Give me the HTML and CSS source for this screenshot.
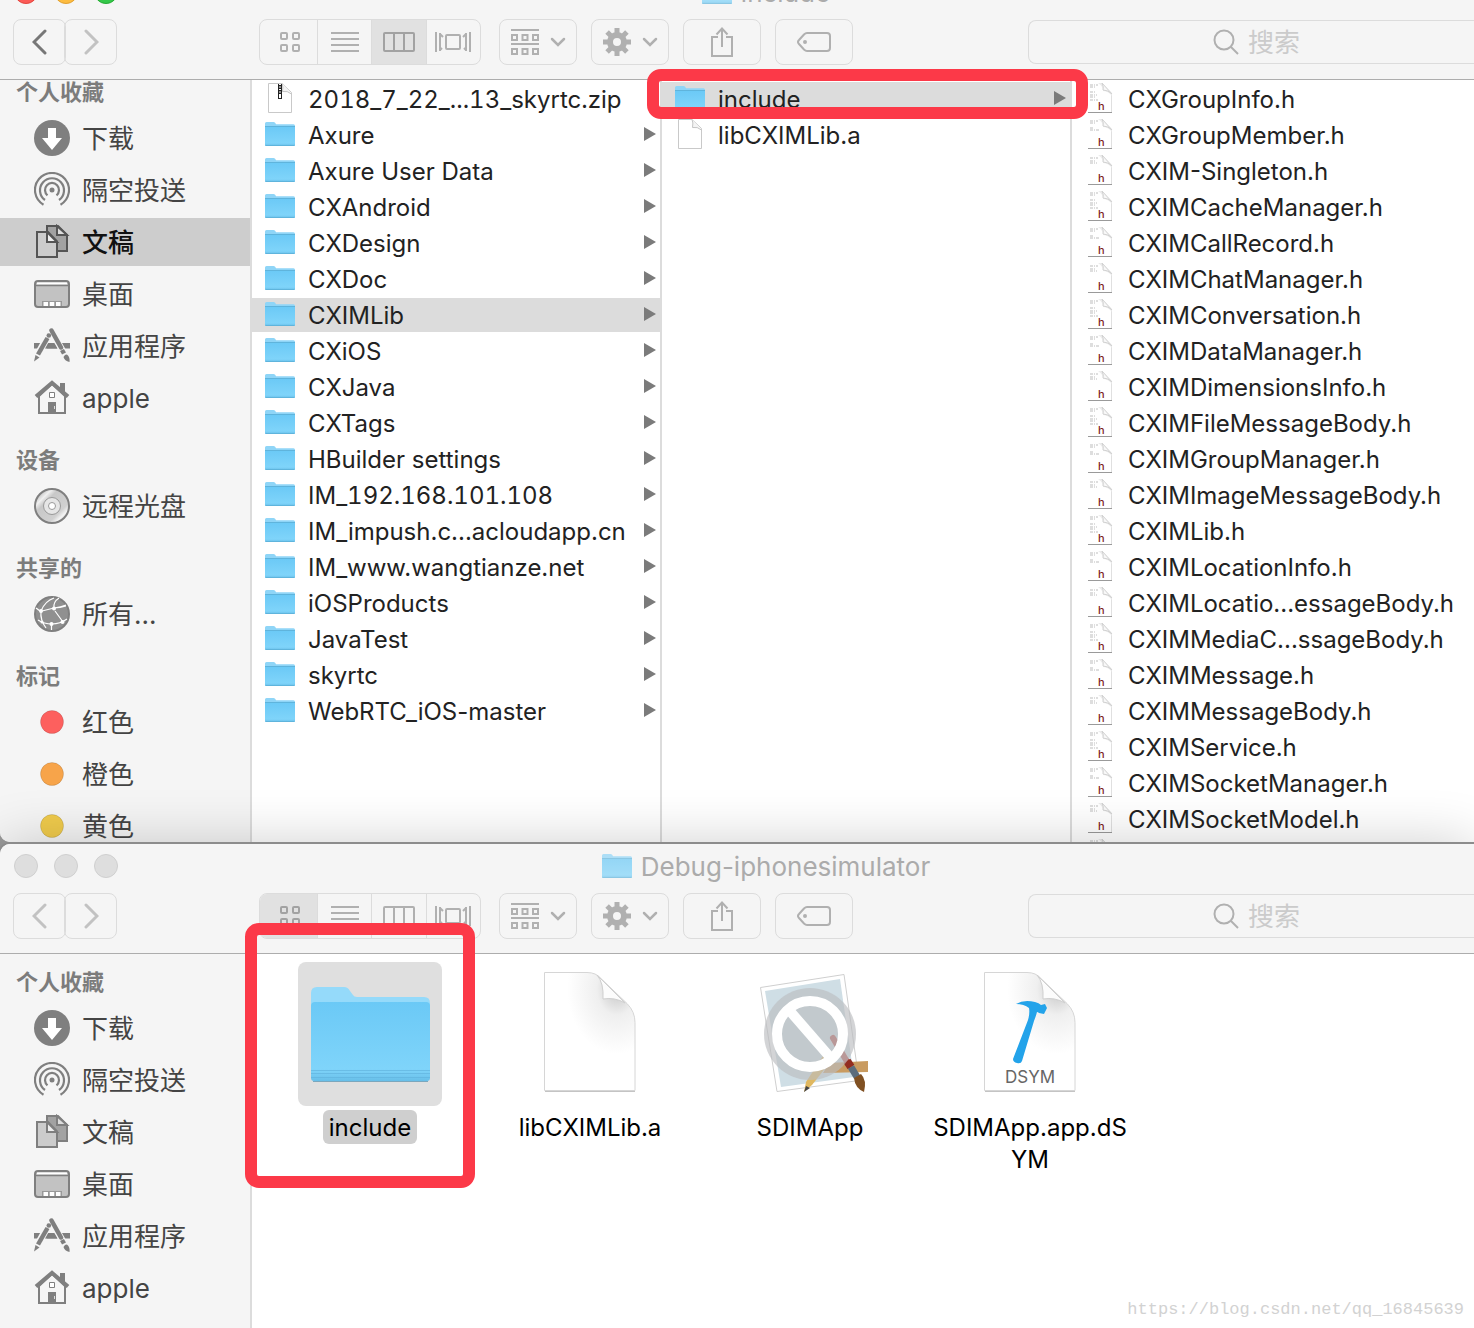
FILE: index.html
```
<!DOCTYPE html>
<html lang="zh-CN">
<head>
    <meta charset="UTF-8">
    <meta name="viewport" content="width=device-width, initial-scale=1.0">
    <title>Finder</title>
    <link rel="stylesheet" href="styles.css">
</head>
<body>
    <!-- 图标 -->
    <svg class="sprite" aria-hidden="true">
        <defs>
            <linearGradient id="gFolder" x1="0" y1="0" x2="0" y2="1">
                <stop offset="0" stop-color="#6bc9f6"/>
                <stop offset=".85" stop-color="#7fd4fa"/>
                <stop offset="1" stop-color="#68bfe9"/>
            </linearGradient>
            <radialGradient id="gFold" cx=".8" cy=".14" r=".55">
                <stop offset=".1" stop-color="#d0d0d0"/>
                <stop offset=".4" stop-color="#efefef"/>
                <stop offset="1" stop-color="#ffffff"/>
            </radialGradient>
            <linearGradient id="gDisc" x1="0" y1="0" x2="1" y2="1">
                <stop offset=".15" stop-color="#c8c8c8"/>
                <stop offset=".25" stop-color="#f0f0f0"/>
                <stop offset=".35" stop-color="#c8c8c8"/>
                <stop offset=".7" stop-color="#d0d0d0"/>
                <stop offset=".8" stop-color="#f4f4f4"/>
                <stop offset=".9" stop-color="#c8c8c8"/>
            </linearGradient>
        </defs>

        <symbol id="folder" viewBox="0 0 30 32">
            <path d="M0 5.500q0-1.500 1.500-1.500h7q1 0 1.600.8l1 1.400H28.500q1.500 0 1.500 1.500V27H0z" fill="#8fd5f7"/>
            <path d="M0 8.500h30V27q0 1-1 1H1q-1 0-1-1z" fill="url(#gFolder)"/>
            <path d="M0 8.500h30M.5 27.500h29" stroke="#5fb4dc" fill="none"/>
        </symbol>
        <symbol id="doc" viewBox="0 0 30 32">
            <path d="M3.500 1.500H17l9.500 9V30.500H3.500z" fill="#fff" stroke="#c9c9c9"/>
            <path d="M17 1.500q1.500 3 .5 8 5-1 9 2.500" fill="#f4f4f4" stroke="#c4c4c4"/>
        </symbol>
        <symbol id="zip" viewBox="0 0 30 32">
            <use href="#doc"/>
            <path d="M15 2v15" stroke="#222" stroke-width="4"/>
            <path d="M15 2v13" stroke="#fff" stroke-width="2" stroke-dasharray="1 1.500"/>
            <path d="M14 12h2v4h-2z" fill="#fff"/>
        </symbol>
        <symbol id="header" viewBox="0 0 30 32">
            <path d="M3 1H17l10 9V30H3z" fill="#fff"/>
            <path d="M26.500 11v19" fill="none" stroke="#e0e0e0"/>
            <path d="M13 1h4l10 10v3q-4-5-9-5 0-5-5-8z" fill="#ececec"/>
            <path d="M17 1q2 4 1 7 5 0 9 4z" fill="#f8f8f8" stroke="#d2d2d2"/>
            <path d="M3 30.500h24" stroke="#9a9a9a"/>
        </symbol>

        <symbol id="download" viewBox="0 0 36 36">
            <circle cx="18" cy="18" r="18" fill="#7f7f7f"/>
            <path d="M14 8h8v10h6L18 30 8 18h6z" fill="#fff"/>
        </symbol>
        <symbol id="airdrop" viewBox="0 0 36 36">
            <g fill="none" stroke="#7f7f7f" stroke-width="2.200">
                <path d="M9.500 32.700A17 17 0 1 1 26.500 32.700"/>
                <path d="M11 28A12 12 0 1 1 25 28"/>
                <path d="M13.500 23.300A7 7 0 1 1 22.500 23.300"/>
            </g>
            <circle cx="18" cy="18" r="2.500" fill="#7f7f7f"/>
        </symbol>
        <symbol id="docs" viewBox="0 0 36 36">
            <g stroke="currentColor" stroke-width="2">
                <path d="M13 2h11l9 9v16H13z" fill="#a2a2a2"/>
                <path d="M23 2v9h10z" fill="#ddd"/>
                <path d="M3 8h11l9 9.500V33H3z" fill="#ccc"/>
                <path d="M13 8v10h10z" fill="#eee"/>
            </g>
        </symbol>
        <symbol id="desktop" viewBox="0 0 36 36">
            <rect x="1" y="5" width="34" height="26" rx="3" fill="#c2c2c2" stroke="#7f7f7f" stroke-width="2"/>
            <path d="M3 6.500h30v2H3z" fill="#fff"/>
            <path d="M2 9.500h32" stroke="#7f7f7f" stroke-width="1.500"/>
            <path d="M8 25h20v5H8z" fill="#999"/>
            <path d="M9.500 26h4.500v4H9.500zM15.750 26h4.500v4h-4.500zM22 26h4.500v4H22z" fill="#fff"/>
        </symbol>
        <symbol id="apps" viewBox="0 0 36 36">
            <path d="M0 15h36v5.500H0z" fill="#7f7f7f"/>
            <path d="M15.500 5 3 28M17 3l15 26" stroke="#f5f5f5" stroke-width="7"/>
            <path d="M12.500 20.500 18 11l5.500 9.500z" fill="#7f7f7f"/>
            <path d="M18 7.500 22 15h-8z" fill="#f5f5f5"/>
            <path d="M13.500 10 4 26.500" stroke="#7f7f7f" stroke-width="4.500"/>
            <circle cx="14.800" cy="7.500" r="2.300" fill="#7f7f7f"/>
            <path d="M1.500 27l4 2.500L0 33.500z" fill="#7f7f7f"/>
            <path d="M17.500 2.500l9.500 17" stroke="#7f7f7f" stroke-width="4.500" stroke-linecap="round"/>
            <path d="M28 22l2 3.500" stroke="#7f7f7f" stroke-width="4.500"/>
            <path d="M29.500 29q2.500-4 4.500-1.500 2 2 1.500 6.500-5-1-6-5z" fill="#7f7f7f"/>
        </symbol>
        <symbol id="home" viewBox="0 0 36 36">
            <path d="M26 3h5v10h-5z" fill="#7f7f7f"/>
            <path d="M5 16 18 4l13 12v17H5z" fill="#f5f5f5" stroke="#7f7f7f" stroke-width="2"/>
            <path d="M2 16.500 18 2.800l16 13.700" fill="none" stroke="#7f7f7f" stroke-width="4"/>
            <path d="M15.500 12.500h5v5h-5z" fill="#fff" stroke="#7f7f7f"/>
            <path d="M14 22h8v11h-8z" fill="#7f7f7f"/>
            <path d="M20.500 26v3" stroke="#ddd"/>
        </symbol>
        <symbol id="disc" viewBox="0 0 36 36">
            <circle cx="18" cy="18" r="17" fill="url(#gDisc)" stroke="#7f7f7f" stroke-width="2"/>
            <circle cx="18" cy="18" r="8.500" fill="#e6e6e6" stroke="#999"/>
            <circle cx="18" cy="18" r="3.500" fill="#fff" stroke="#999"/>
        </symbol>
        <symbol id="network" viewBox="0 0 36 36">
            <circle cx="18" cy="18" r="17" fill="#909090" stroke="#7f7f7f" stroke-width="2"/>
            <g fill="none" stroke="#fff" stroke-width="1.200">
                <path d="M2 12q3 3 6 3l12-3q7-1 12-3M7 15Q11 5 20 2M7 15q-1 9 5 17M20 12q-1-6 5-10M20 12q6 0 12-2M21 15l8 11M4 24q6 4 14 4 8 0 15-5M17.500 28v6"/>
            </g>
            <g fill="#fff">
                <circle cx="7" cy="15" r="2"/><circle cx="20" cy="12.500" r="2"/>
                <circle cx="17.500" cy="28" r="2"/><circle cx="28.500" cy="26" r="2"/><circle cx="8" cy="26" r="1.500"/>
            </g>
        </symbol>
        <symbol id="tag-dot" viewBox="0 0 36 36">
            <circle cx="18" cy="18" r="11.500" fill="currentColor" stroke="#000" stroke-opacity=".12"/>
        </symbol>

        <symbol id="chevron" viewBox="0 0 16 10">
            <path d="M2 2l6 6 6-6" fill="none" stroke="currentColor" stroke-width="2.500" stroke-linecap="round"/>
        </symbol>
    </svg>

    <template id="toolbarTpl">
        <header class="toolbar">
            <div class="titlebar">
                <div class="lights">
                    <button class="light close" aria-label="关闭"></button>
                    <button class="light min" aria-label="最小化"></button>
                    <button class="light max" aria-label="缩放"></button>
                </div>
                <svg class="title-icon"><use href="#folder"/></svg>
                <h1 class="title"></h1>
            </div>
            <div class="tools">
                <div class="nav">
                    <button class="tool back" aria-label="后退"><svg width="16" height="26" viewBox="0 0 16 26"><path d="M13 2 2 13l11 11"/></svg></button>
                    <button class="tool forward" aria-label="前进"><svg width="16" height="26" viewBox="0 0 16 26"><path d="M3 2l11 11L3 24"/></svg></button>
                </div>
                <div class="views">
                    <button class="view" aria-label="图标"><svg width="20" height="20"><path d="M1 2q0-1 1-1h4q1 0 1 1v4q0 1-1 1H2q-1 0-1-1zM13 2q0-1 1-1h4q1 0 1 1v4q0 1-1 1h-4q-1 0-1-1zM1 14q0-1 1-1h4q1 0 1 1v4q0 1-1 1H2q-1 0-1-1zM13 14q0-1 1-1h4q1 0 1 1v4q0 1-1 1h-4q-1 0-1-1z"/></svg></button>
                    <button class="view" aria-label="列表"><svg width="28" height="20"><path d="M0 1h28M0 7h28M0 13h28M0 19h28"/></svg></button>
                    <button class="view" aria-label="分栏"><svg width="32" height="20"><rect x="1" y="1" width="30" height="18" rx="1"/><path d="M11 1v18M21 1v18"/></svg></button>
                    <button class="view" aria-label="Cover Flow"><svg width="36" height="20"><path d="M1 0v20M35 0v20M5 1v18M5 2l3 3M5 18l2-2M31 1v18M31 2l-3 3M31 18l-2-2"/><rect x="11" y="3" width="14" height="14" rx="1"/></svg></button>
                </div>
                <button class="tool wide" aria-label="排列">
                    <svg width="28" height="26"><path d="M0 1h28M0 15h28"/><path d="M1 6h5v5H1zM11.500 6h5v5h-5zM22 6h5v5h-5zM1 20h5v5H1zM11.500 20h5v5h-5zM22 20h5v5h-5z"/></svg>
                    <svg width="16" height="10"><use href="#chevron"/></svg>
                </button>
                <button class="tool wide" aria-label="操作">
                    <svg width="28" height="28" viewBox="-14 -14 28 28"><circle r="7" stroke-width="6"/><path d="M0-9v-5M0 9v5M-9 0h-5M9 0h5M6.400-6.400l3.500-3.500M-6.400-6.400l-3.500-3.500M6.400 6.400l3.500 3.500M-6.400 6.400l-3.500 3.500" stroke-width="5"/></svg>
                    <svg width="16" height="10"><use href="#chevron"/></svg>
                </button>
                <button class="tool wide" aria-label="共享"><svg width="22" height="30"><path d="M7 10H1v19h20V10h-6M11 2v18M5.500 7.500 11 1.500l5.500 6"/></svg></button>
                <button class="tool wide" aria-label="标记"><svg width="34" height="20"><path d="M10 1h20q3 0 3 3v12q0 3-3 3H10q-1.500 0-3-1.500l-5-5.500q-2-2 0-4l5-5.500Q8.500 1 10 1z"/><circle cx="8" cy="10" r="1"/></svg></button>
                <label class="search">
                    <svg width="26" height="26"><circle cx="11" cy="11" r="9.500"/><path d="M18 18l7 7"/></svg>
                    <input type="text" placeholder="搜索" aria-label="搜索">
                </label>
            </div>
        </header>
    </template>

    <section class="window back-window" data-title="include" data-view="2">
        <div class="content">
            <nav class="sidebar" data-active="文稿"></nav>
            <ul class="column" id="col1"></ul>
            <ul class="column" id="col2"></ul>
            <ul class="column last" id="col3"></ul>
        </div>
    </section>

    <section class="window front-window" data-title="Debug-iphonesimulator" data-view="0">
        <div class="content">
            <nav class="sidebar" data-short></nav>
            <ul class="icons">
                <li class="item selected">
                    <svg class="thumb" viewBox="0 0 144 144">
                        <path d="M13 31q0-6 6-6h27q4 0 6 4l3 4q1 2 4 2h67q6 0 6 6v20H13z" fill="#95dafa"/>
                        <path d="M13 44q0-4 4-4h111q4 0 4 4v72q0 3-3 3H16q-3 0-3-3z" fill="url(#gFolder)"/>
                        <path d="M13 108.500h119M13 111.500h119M13 115.500h119" stroke="#62b5df" opacity=".7"/>
                        <path d="M15 119.500h115" stroke="#7ba7bd"/>
                    </svg>
                    <span class="label">include</span>
                </li>
                <li class="item">
                    <svg class="thumb" viewBox="0 0 144 144">
                        <path d="M26.500 10.500H69q9 0 14 6l26 25q8 8 8 19V128.500H26.500z" fill="url(#gFold)" stroke="#d6d6d6"/>
                        <path d="M79 13q7 8 6 24 12-2 22 4z" fill="#fcfcfc" stroke="#cfcfcf"/>
                        <path d="M27 129.500h90" stroke="#c4c4c4"/>
                    </svg>
                    <span class="label">libCXIMLib.a</span>
                </li>
                <li class="item">
                    <svg class="thumb" viewBox="0 0 144 144">
                        <path d="M22.500 25.500 106 12.500l15 106-82 11z" fill="#fff" stroke="#cfcfcf"/>
                        <path d="M27 29l75-12 14 98-73 10z" fill="#cfdee5"/>
                        <path d="M91 101l39-2v11l-45 1z" fill="#c99b60"/>
                        <path d="M85 94l8 5-19 24-8 7 2-10z" fill="#e0b860"/>
                        <path d="M66 130l2-6 4 2z" fill="#444"/>
                        <path d="M95 76l16 27" stroke="#b5544d" stroke-width="6" stroke-linecap="round"/>
                        <path d="M109 99l4 6" stroke="#922c20" stroke-width="8"/>
                        <path d="M113 105l6 10" stroke="#5b6c7c" stroke-width="7"/>
                        <path d="M116 116l7-4q6 6 3 18-9-4-10-14z" fill="#805022"/>
                        <circle cx="72" cy="72" r="46" fill="#bbbdc0" opacity=".65"/>
                        <circle cx="72" cy="72" r="33" fill="none" stroke="#fff" stroke-width="10"/>
                        <path d="M51 48l40 46" stroke="#fff" stroke-width="10"/>
                    </svg>
                    <span class="label">SDIMApp</span>
                </li>
                <li class="item">
                    <svg class="thumb" viewBox="0 0 144 144">
                        <path d="M26.500 10.500H69q9 0 14 6l26 25q8 8 8 19V128.500H26.500z" fill="url(#gFold)" stroke="#d6d6d6"/>
                        <path d="M79 13q7 8 6 24 12-2 22 4z" fill="#fcfcfc" stroke="#cfcfcf"/>
                        <path d="M27 129.500h90" stroke="#c4c4c4"/>
                        <path d="M58 42q8-5 19-2 4 1 6 3l4-1 2 4-3 6-5-1q-1-1-2-1-1 4-3 9L64 99q-1 3-5 2-4-1-4-4L70 58q2-7 1-12-5-4-13-4z" fill="#23a3ea"/>
                        <text x="72" y="121" class="doc-type">DSYM</text>
                    </svg>
                    <span class="label">SDIMApp.app.dSYM</span>
                </li>
            </ul>
        </div>
        <p class="watermark">https://blog.csdn.net/qq_16845639</p>
        <div class="mark mark-icon"></div>
    </section>
    <div class="mark mark-row"></div>

    <script>
        const sidebar = [
            { head: "个人收藏", items: [["下载", "download"], ["隔空投送", "airdrop"], ["文稿", "docs"], ["桌面", "desktop"], ["应用程序", "apps"], ["apple", "home"]] },
            { head: "设备", items: [["远程光盘", "disc"]] },
            { head: "共享的", items: [["所有...", "network"]] },
            { head: "标记", items: [["红色", "tag-dot", "red"], ["橙色", "tag-dot", "orange"], ["黄色", "tag-dot", "yellow"]] }
        ];

        const folders = [
            "Axure", "Axure User Data", "CXAndroid", "CXDesign", "CXDoc", "CXIMLib", "CXiOS", "CXJava", "CXTags",
            "HBuilder settings", "IM_192.168.101.108", "IM_impush.c...acloudapp.cn", "IM_www.wangtianze.net",
            "iOSProducts", "JavaTest", "skyrtc", "WebRTC_iOS-master"
        ];

        const headers = [
            "CXGroupInfo.h", "CXGroupMember.h", "CXIM-Singleton.h", "CXIMCacheManager.h", "CXIMCallRecord.h",
            "CXIMChatManager.h", "CXIMConversation.h", "CXIMDataManager.h", "CXIMDimensionsInfo.h",
            "CXIMFileMessageBody.h", "CXIMGroupManager.h", "CXIMImageMessageBody.h", "CXIMLib.h",
            "CXIMLocationInfo.h", "CXIMLocatio...essageBody.h", "CXIMMediaC...ssageBody.h", "CXIMMessage.h",
            "CXIMMessageBody.h", "CXIMService.h", "CXIMSocketManager.h", "CXIMSocketModel.h", ""
        ];

        // 头文件缩略图里的代码行
        const codeLines = [
            "M5 3h8M5 5h5M5 10h6M5 13h7M5 15h5M5 18h8",
            "M5 3h8M5 5h6M5 10h3M5 12h9",
            "M5 4h8M5 7h6M5 9h7"
        ];

        function row(name, icon, opt = {}) {
            const code = icon === "header" ? `<path class="code" d="${codeLines[opt.code % 3]}"/>` : "";
            const mark = icon === "header" && name ? '<text x="13" y="28" class="h-mark">h</text>' : "";
            return `<li class="row ${opt.selected ? "selected" : ""}">
                <svg class="file-icon" viewBox="0 0 30 32"><use href="#${icon}"/>${code}${mark}</svg>
                <span class="name ${/\d/.test(name) ? "numeric" : ""}">${name}</span>
                ${icon === "folder" ? '<i class="arrow"></i>' : ""}
            </li>`;
        }

        document.getElementById("col1").innerHTML =
            row("2018_7_22_...13_skyrtc.zip", "zip") +
            folders.map(f => row(f, "folder", { selected: f === "CXIMLib" })).join("");
        document.getElementById("col2").innerHTML =
            row("include", "folder", { selected: true }) + row("libCXIMLib.a", "doc");
        document.getElementById("col3").innerHTML =
            headers.map((h, i) => row(h, "header", { code: i })).join("");

        document.querySelectorAll(".sidebar").forEach(el => {
            const groups = "short" in el.dataset ? sidebar.slice(0, 1) : sidebar;
            el.innerHTML = groups.map(g => `<section class="group">
                <h2 class="group-head">${g.head}</h2>
                ${g.items.map(([text, icon, color]) => `<a href="#" class="place ${text === el.dataset.active ? "active" : ""}">
                    <svg class="place-icon ${color || ""}"><use href="#${icon}"/></svg><span class="place-name">${text}</span></a>`).join("")}
            </section>`).join("");
        });

        document.querySelectorAll(".window").forEach(win => {
            const bar = document.getElementById("toolbarTpl").content.cloneNode(true);
            bar.querySelector(".title").textContent = win.dataset.title;
            bar.querySelectorAll(".view")[win.dataset.view].classList.add("on");
            win.prepend(bar);
        });
    </script>
</body>
</html>
```
FILE: styles.css
```
:root {
    --chrome: #f5f5f5;
    --line: #dcdcdc;
    --glyph: #b0b0b0;
    --mark: #fc3948;
}
* {
    box-sizing: border-box;
}
body {
    margin: 0;
    min-height: 100vh;
    display: flex;
    flex-direction: column;
    position: relative;
    overflow: hidden;
    background: #9a9a9a;
    font-family: Inter, 'Noto Sans CJK SC', sans-serif;
    font-size: 24px;
    color: #222;
}
ul, h1, h2, p {
    margin: 0;
    padding: 0;
    list-style: none;
}
button {
    padding: 0;
    border: none;
    background: none;
    color: inherit;
}
.sprite {
    position: absolute;
    width: 0;
    height: 0;
}

/* 窗口 */
.window {
    display: flex;
    flex-direction: column;
    background: #fff;
    overflow: hidden;
}
.back-window {
    margin-top: -30px;
    border-radius: 0 0 0 10px;
}
.back-window .content {
    max-height: 762px;
}
.front-window {
    flex: 1;
    position: relative;
    margin-top: 2px;
    border-radius: 10px 0 0 0;
    box-shadow: 0 0 0 2px #8c8c8c, 0 0 56px rgba(0,0,0,0.2);
}
.content {
    display: flex;
    flex: 1;
    overflow: hidden;
}

/* 工具栏 */
.toolbar {
    flex: none;
    height: 110px;
    background: var(--chrome);
    border-bottom: 1px solid #adadad;
}
.titlebar {
    position: relative;
    display: flex;
    justify-content: center;
    align-items: center;
    gap: 9px;
    height: 49px;
    padding: 0 0 4px 58px;
}
.lights {
    position: absolute;
    left: 14px;
    top: 10px;
    display: flex;
    gap: 16px;
}
.light {
    width: 24px;
    height: 24px;
    border-radius: 50%;
    background: #dedede;
    border: 1px solid #cfcfcf;
}
.back-window .close { background: #fc5b57; border-color: #e2463f; }
.back-window .min { background: #fdbc40; border-color: #e0a033; }
.back-window .max { background: #34c84a; border-color: #27aa35; }
.title-icon {
    width: 30px;
    height: 32px;
    margin-bottom: 2px;
    opacity: 0.7;
}
.title {
    font-size: 26px;
    font-weight: 400;
    line-height: 32px;
    color: #ababab;
}
.tools {
    display: flex;
    gap: 14px;
    padding-left: 13px;
}
.tools svg {
    flex: none;
    fill: none;
    stroke: var(--glyph);
    stroke-width: 2;
    color: var(--glyph);
}
.tool {
    display: flex;
    justify-content: center;
    align-items: center;
    gap: 11px;
    width: 53px;
    height: 46px;
    border: 1px solid var(--line);
    border-radius: 8px;
}
.tool.wide {
    width: 78px;
}
.nav {
    display: flex;
    margin-right: 128px;
}
.nav .forward {
    margin-left: -2px;
}
.nav svg {
    stroke: #c2c2c2;
    stroke-width: 3;
    stroke-linecap: round;
}
.back-window .back svg {
    stroke: #777;
}
.views {
    display: flex;
    width: 222px;
    height: 46px;
    margin-right: 4px;
    border: 1px solid var(--line);
    border-radius: 8px;
    overflow: hidden;
}
.view {
    display: flex;
    flex: 1;
    justify-content: center;
    align-items: center;
}
.view:first-child {
    flex: none;
    width: 57px;
    padding-left: 2px;
}
.view + .view {
    border-left: 1px solid var(--line);
}
.view.on {
    background: #e1e1e1;
}
.view.on svg {
    stroke: #a2a2a2;
}
.search {
    display: flex;
    flex: 1;
    justify-content: center;
    align-items: center;
    gap: 9px;
    height: 44px;
    margin: 1px 0 0 161px;
    padding-left: 14px;
    border: 1px solid var(--line);
    border-right: none;
    border-radius: 8px 0 0 8px;
}
.search input {
    width: 56px;
    padding: 0;
    border: none;
    background: none;
    font: inherit;
    font-size: 26px;
    outline: none;
}
.search input::placeholder {
    color: #cbcbcb;
}

/* 边栏 */
.sidebar {
    flex: none;
    width: 252px;
    background: var(--chrome);
    border-right: 2px solid var(--line);
}
.front-window .sidebar {
    padding-top: 16px;
}
.group {
    margin-bottom: 26px;
}
.group-head {
    margin-bottom: 10px;
    padding-left: 16px;
    font-size: 22px;
    font-weight: 700;
    line-height: 24px;
    color: #7c7c7c;
}
.place {
    display: flex;
    align-items: center;
    gap: 12px;
    height: 48px;
    margin-bottom: 4px;
    padding-left: 34px;
    font-size: 26px;
    color: #444;
    text-decoration: none;
    white-space: nowrap;
}
.place.active {
    background: #cdcdcd;
    color: #111;
    font-weight: 500;
}
.place-name {
    line-height: 32px;
    padding-top: 1px;
}
.place-icon {
    width: 36px;
    height: 36px;
    color: #7f7f7f;
}
.active .place-icon { color: #555; }
.place-icon.red { color: #fd605e; }
.place-icon.orange { color: #f7a44a; }
.place-icon.yellow { color: #f0cb4c; }

/* 分栏视图 */
.column {
    flex: none;
    width: 410px;
    padding-top: 2px;
    border-right: 2px solid var(--line);
}
.column.last {
    flex: 1;
    border-right: none;
}
.row {
    display: flex;
    align-items: center;
    height: 34px;
    margin-bottom: 2px;
    padding: 0 4px 0 13px;
    line-height: 34px;
    white-space: nowrap;
}
.row.selected {
    background: #dcdcdc;
}
.file-icon {
    flex: none;
    width: 30px;
    height: 32px;
    margin: 0 13px 2px 0;
}
.name {
    flex: 1;
    padding-top: 2px;
}
.name.numeric {
    font-variant-numeric: tabular-nums;
}
.arrow {
    margin-bottom: 2px;
    border-left: 12px solid #7b7b7b;
    border-top: 7px solid transparent;
    border-bottom: 7px solid transparent;
}
.h-mark {
    font-size: 11px;
    font-weight: 500;
    fill: #7d1c1c;
}
.code {
    fill: none;
    stroke: #bdbdbd;
    stroke-dasharray: 3 1 1 1;
}

/* 图标视图 */
.icons {
    display: flex;
    flex: 1;
    flex-wrap: wrap;
    align-content: flex-start;
    padding: 8px;
}
.item {
    display: flex;
    flex-direction: column;
    align-items: center;
    gap: 4px;
    width: 220px;
    color: #000;
}
.thumb {
    width: 144px;
    height: 144px;
    border-radius: 8px;
}
.selected .thumb {
    background: #dfdfdf;
}
.label {
    max-width: 206px;
    padding: 2px 6px 0;
    border-radius: 6px;
    line-height: 32px;
    text-align: center;
    word-break: break-all;
}
.selected .label {
    background: #cfcfcf;
}
.doc-type {
    font-size: 17px;
    fill: #666;
    text-anchor: middle;
}

/* 红框标注 */
.mark {
    position: absolute;
    border: 12px solid var(--mark);
    border-radius: 14px;
    pointer-events: none;
}
.mark-row {
    left: 647px;
    top: 69px;
    width: 441px;
    height: 50px;
}
.mark-icon {
    left: 245px;
    top: 79px;
    width: 230px;
    height: 265px;
}
.watermark {
    position: absolute;
    right: 10px;
    bottom: 16px;
    font-family: 'Liberation Mono', monospace;
    font-size: 17px;
    line-height: 24px;
    color: #d2d2d2;
}
```
